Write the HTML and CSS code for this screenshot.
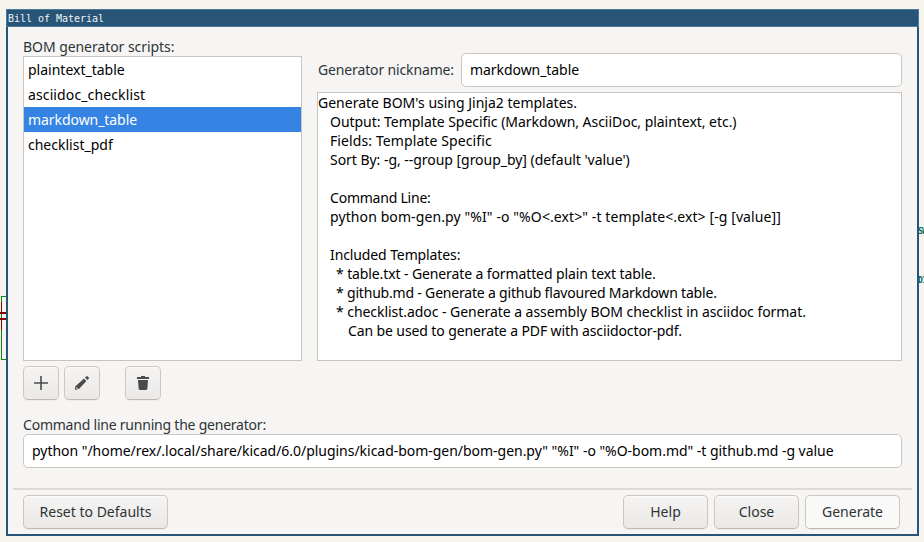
FILE: index.html
```html
<!DOCTYPE html>
<html lang="en">
<head>
<meta charset="utf-8">
<title>Bill of Material</title>
<link rel="stylesheet" href="styles.css">
</head>
<body>
<!-- Schematic canvas showing around the dialog -->
<svg class="schematic" width="6" height="66" viewBox="0 0 6 66" shape-rendering="crispEdges">
  <path class="wire" d="M6 1.5H1.5V64.5H6"/>
  <path class="pin" d="M1.5 7V17M1.5 25V35"/>
  <path class="plate" d="M0 18H6M0 24H6"/>
</svg>
<span class="net net-top">SW</span>
<span class="net net-bottom">D1</span>

<div class="dialog">
  <header class="titlebar">Bill of Material</header>
  <main class="content">
    <div class="columns">
      <section class="scripts">
        <div class="label snug">BOM generator scripts:</div>
        <ul class="list">
          <li>plaintext_table</li>
          <li class="wide">asciidoc_checklist</li>
          <li class="selected snug">markdown_table</li>
          <li>checklist_pdf</li>
        </ul>
        <div class="tools">
          <button class="btn icon" aria-label="Add">
            <svg width="16" height="16" viewBox="0 0 16 16"><path d="M7.200 1h1.600v6.200H15v1.600H8.800V15H7.200V8.800H1V7.200h6.200z"/></svg>
          </button>
          <button class="btn icon" aria-label="Edit">
            <svg width="16" height="16" viewBox="0 0 16 16"><path fill-rule="evenodd" d="M11 2.600 12.200 1.400Q13 .7 13.800 1.500L14.600 2.300Q15.300 3.100 14.600 3.900L13.400 5ZM10 3.600 12.400 6 5.200 13.800 1 15 1.200 11.400ZM2.400 12 2.200 13.900 4 13.500Z"/></svg>
          </button>
          <button class="btn icon delete" aria-label="Delete">
            <svg width="16" height="16" viewBox="0 0 16 16"><path d="M6 1h4v1h4v2H2V2h4zM3 5h10l-.6 8.600Q12.300 15 11 15H5Q3.700 15 3.600 13.600z"/></svg>
          </button>
        </div>
      </section>
      <section class="details">
        <div class="nickname">
          <label class="label tight">Generator nickname:</label>
          <div class="field snug">markdown_table</div>
        </div>
        <div class="info">
          <p>Generate BOM's using Jinja2 templates.</p>
          <p class="in1 t-a">Output: Template Specific (Markdown, AsciiDoc, plaintext, etc.)</p>
          <p class="in1 w-a">Fields: Template Specific</p>
          <p class="in1 t-a">Sort By: -g, --group [group_by] (default 'value')</p>
          <p></p>
          <p class="in1 t-c">Command Line:</p>
          <p class="in1 w-a">python bom-gen.py "%I" -o "%O&lt;.ext&gt;" -t template&lt;.ext&gt; [-g [value]]</p>
          <p></p>
          <p class="in1 t-b">Included Templates:</p>
          <p class="in2 t-b">* table.txt - Generate a formatted plain text table.</p>
          <p class="in2 t-e">* github.md - Generate a github flavoured Markdown table.</p>
          <p class="in2 t-d">* checklist.adoc - Generate a assembly BOM checklist in asciidoc format.</p>
          <p class="in3 t-b">Can be used to generate a PDF with asciidoctor-pdf.</p>
        </div>
      </section>
    </div>
    <div class="command">
      <div class="label t-c">Command line running the generator:</div>
      <div class="field t-f">python "/home/rex/.local/share/kicad/6.0/plugins/kicad-bom-gen/bom-gen.py" "%I" -o "%O-bom.md" -t github.md -g value</div>
    </div>
  </main>
  <hr class="separator">
  <footer class="actions">
    <button class="btn reset">Reset to Defaults</button>
    <button class="btn">Help</button>
    <button class="btn">Close</button>
    <button class="btn primary">Generate</button>
  </footer>
</div>
</body>
</html>
```
FILE: styles.css
```css
* { box-sizing: border-box; }

body {
  position: relative;
  width: 924px;
  height: 542px;
  margin: 0;
  padding: 9px 5px 0 6px;
  overflow: hidden;
  background: #f5f4ef;
  font: 14px/19px "Noto Sans", sans-serif;
  color: #000;
}

.schematic { position: absolute; left: 0; top: 295px; fill: none; }
.wire { stroke: #008f0e; }
.pin { stroke: #840000; }
.plate { stroke: #840000; stroke-width: 2; }

.net {
  position: absolute;
  left: 918px;
  font: bold 8px/10px "DejaVu Sans Mono", monospace;
  letter-spacing: -.5px;
  color: #006464;
}
.net-top { top: 227px; }
.net-bottom { top: 276px; }

.dialog {
  position: relative;
  display: flex;
  flex-direction: column;
  width: 913px;
  height: 527px;
  border: solid #285577;
  border-width: 0 2px 2px;
  background: #f6f5f4;
}

.titlebar {
  height: 18px;
  margin: 0 -2px;
  padding: 1px 0 0 1px;
  border: 1px solid #4c7899;
  background: #285577;
  font: 10px/16px "DejaVu Sans Mono", monospace;
  letter-spacing: -.02px;
  color: #eef2f5;
}

.content { flex: 1; padding: 10px 15px 0; }
.columns { display: flex; gap: 15px; }
.label { color: #2e3436; white-space: nowrap; }
.tight { letter-spacing: -.14px; }
.snug { letter-spacing: -.06px; }

.scripts { width: 279px; }
.list {
  height: 305px;
  margin: 0;
  padding: 0;
  border: 1px solid #c8c4bf;
  background: #fff;
  list-style: none;
}
.list li { height: 25px; padding-left: 4px; line-height: 25px; }
.list .wide { letter-spacing: .12px; }
.list .selected { background: #3584e4; color: #fff; }

.tools { display: flex; gap: 5px; margin-top: 5px; }
.delete { margin-left: 20px; }

.btn {
  height: 34px;
  padding: 0 0 2px;
  border: 1px solid #cdc7c2;
  border-bottom-color: #bfb8b1;
  border-radius: 5px;
  background: linear-gradient(#f5f4f3, #ebe9e7);
  box-shadow: inset 0 1px #fbfafa, 0 1px 1px #0000000a;
  font: inherit;
  color: #2e3436;
}
.icon {
  display: flex;
  width: 36px;
  padding: 0;
  align-items: center;
  justify-content: center;
}
.icon svg { fill: #4b4b4b; }

.details { flex: 1; padding-top: 16px; }
.nickname {
  display: flex;
  align-items: center;
  justify-content: space-between;
  padding-left: 1px;
}
.nickname .label { padding-bottom: 2px; }
.nickname .field { width: 441px; }
.field {
  height: 34px;
  padding-left: 8px;
  border: 1px solid #cdc7c2;
  border-radius: 5px;
  background: #fff;
  line-height: 32px;
  white-space: nowrap;
}

.info {
  height: 269px;
  margin-top: 5px;
  border: 1px solid #c8c4bf;
  background: #fff;
  white-space: nowrap;
}
.info p { height: 19px; margin: 0; }
.info .in1 { padding-left: 12px; }
.info .in2 { padding-left: 18px; }
.info .in3 { padding-left: 30px; }

.t-a { letter-spacing: -.037px; }
.t-b { letter-spacing: -.11px; }
.t-c { letter-spacing: -.22px; }
.t-d { letter-spacing: -.05px; }
.t-e { letter-spacing: -.19px; }
.t-f { letter-spacing: -.03px; }
.w-a { letter-spacing: .1px; }

.command { margin-top: 15px; }

.separator {
  width: 899px;
  height: 2px;
  margin: 0 5px;
  border: 0;
  background: #dcdbd9;
}

.actions { display: flex; gap: 6px; padding: 5px 17px 5px 15px; }
.actions .btn { width: 85px; }
.actions .reset { width: 145px; margin-right: auto; }
.actions .primary { width: 95px; background: #f9f9f8; }
```
